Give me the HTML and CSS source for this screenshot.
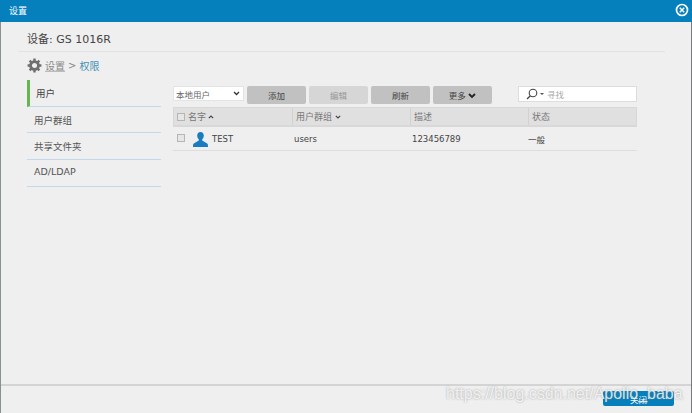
FILE: index.html
```html
<!DOCTYPE html>
<html lang="en">
<head>
    <meta charset="UTF-8">
    <title>设置</title>
    <link rel="stylesheet" href="styles.css">
</head>
<body>
    <div class="window">
        <div class="titlebar">
            <span class="title">设置</span>
            <svg class="close-icon" width="14" height="14" viewBox="0 0 14 14">
                <circle cx="7" cy="7" r="5.5" fill="none" stroke="#fff" stroke-width="1.7"/>
                <path d="M4.8 4.8l4.4 4.4M9.2 4.8l-4.4 4.4" stroke="#fff" stroke-width="1.5"/>
            </svg>
        </div>

        <div class="content">
            <div class="device">设备: GS 1016R</div>
            <div class="breadcrumb">
                <svg width="15" height="15" viewBox="0 0 16 16">
                    <circle cx="8" cy="8" r="4.2" fill="none" stroke="#6f6f6f" stroke-width="3"/>
                    <path d="M8 .6v3M8 12.4v3M.6 8h3M12.4 8h3M2.8 2.8l2.1 2.1M11.1 11.1l2.1 2.1M13.2 2.8l-2.1 2.1M4.9 11.1l-2.1 2.1" stroke="#6f6f6f" stroke-width="2.6"/>
                </svg>
                <span class="crumb-link">设置</span>
                <span class="crumb-sep">&gt;</span>
                <span class="crumb-current">权限</span>
            </div>

            <div class="main">
                <ul class="sidebar">
                    <li class="active">用户</li>
                    <li>用户群组</li>
                    <li>共享文件夹</li>
                    <li>AD/LDAP</li>
                </ul>

                <div class="panel">
                    <div class="toolbar">
                        <div class="select">本地用户
                            <svg width="7" height="5" viewBox="0 0 7 5"><path d="M1 1l2.5 2.5L6 1" fill="none" stroke="#333" stroke-width="1.3"/></svg>
                        </div>
                        <button class="btn">添加</button>
                        <button class="btn disabled">编辑</button>
                        <button class="btn">刷新</button>
                        <button class="btn">更多
                            <svg width="8" height="6" viewBox="0 0 8 6"><path d="M1 1l3 3 3-3" fill="none" stroke="#222" stroke-width="1.8"/></svg>
                        </button>
                        <div class="search">
                            <svg width="12" height="12" viewBox="0 0 12 12">
                                <circle cx="7" cy="5" r="3.8" fill="none" stroke="#444" stroke-width="1.1"/>
                                <path d="M4.4 7.8L1 11" stroke="#444" stroke-width="1.3"/>
                            </svg>
                            <span class="search-caret"></span>
                            <span class="search-text">寻找</span>
                        </div>
                    </div>

                    <div class="table">
                        <div class="row head">
                            <div class="cell col-name"><span class="check"></span>名字
                                <svg width="6" height="4" viewBox="0 0 6 4"><path d="M.8 3.2L3 1l2.2 2.2" fill="none" stroke="#444" stroke-width="1.1"/></svg>
                            </div>
                            <div class="cell col-group">用户群组
                                <svg width="6" height="4" viewBox="0 0 6 4"><path d="M.8.8L3 3 5.200.8" fill="none" stroke="#444" stroke-width="1.1"/></svg>
                            </div>
                            <div class="cell col-desc">描述</div>
                            <div class="cell col-status">状态</div>
                        </div>
                        <div class="row body-row">
                            <div class="cell col-name"><span class="check"></span>
                                <svg class="user-icon" width="15" height="15" viewBox="0 0 15 15">
                                    <path d="M7.500 0C5.400 0 4.200 1.500 4.200 3.600c0 1.600.7 3 1.600 3.800v1.200L.8 11.400C.2 11.800 0 12.500 0 15h15c0-2.500-.2-3.200-.8-3.600L9.200 8.600V7.400c.9-.8 1.600-2.200 1.600-3.800C10.800 1.500 9.600 0 7.500 0z" fill="#1a7cc0"/>
                                </svg>
                                TEST
                            </div>
                            <div class="cell col-group">users</div>
                            <div class="cell col-desc">123456789</div>
                            <div class="cell col-status">一般</div>
                        </div>
                    </div>
                </div>
            </div>
        </div>

        <div class="footer">
            <button class="close-btn">关闭</button>
        </div>

        <div class="watermark">https://blog.csdn.net/Apollo_baba</div>
    </div>
</body>
</html>
```

FILE: styles.css
```css
* {
    box-sizing: border-box;
}
html, body {
    margin: 0;
    height: 100%;
}
body {
    font-family: "DejaVu Sans", "Noto Sans CJK SC", sans-serif;
    font-size: 9px;
    color: #444;
    background-color: #efefef;
    overflow: hidden;
}
.window {
    position: relative;
    display: flex;
    flex-direction: column;
    height: 413px;
    border-left: 1px solid #8a8f92;
    border-right: 1px solid #77797b;
}
.titlebar {
    display: flex;
    align-items: center;
    justify-content: space-between;
    flex: 0 0 22px;
    margin: 0 -1px;
    padding: 0 3px 2px 9px;
    background-color: #0580bc;
    color: #fff;
}
.title {
    font-size: 9px;
}
.content {
    flex: 1;
    padding: 0 26px 0 17px;
}
.device {
    height: 30px;
    padding: 8px 0 0 9px;
    border-bottom: 1px solid #e2e2e2;
    font-size: 11px;
    color: #444;
}
.breadcrumb {
    display: flex;
    align-items: center;
    gap: 3px;
    height: 28px;
    padding: 0 0 2px 9px;
    font-size: 10px;
    color: #888;
}
.crumb-link {
    text-decoration: underline;
    text-decoration-color: #bbb;
}
.crumb-current {
    color: #3f8fb5;
}
.main {
    display: flex;
    padding-left: 9px;
}
.sidebar {
    flex: 0 0 134px;
    margin: 0;
    padding: 0;
    list-style: none;
}
.sidebar li {
    height: 26.700px;
    padding: 6px 0 0 7px;
    border-bottom: 1px solid #c3d8ec;
    font-size: 9.500px;
    color: #555;
}
.sidebar li.active {
    border-left: 3px solid #68b450;
    padding-left: 6px;
    color: #444;
}
.panel {
    width: 464px;
    margin-left: 12px;
    padding-top: 6px;
}
.toolbar {
    display: flex;
    align-items: flex-start;
    gap: 3px;
    height: 21px;
}
.select {
    display: flex;
    align-items: center;
    justify-content: space-between;
    width: 71px;
    height: 15px;
    padding: 0 3px 0 2px;
    background-color: #fff;
    border: 1px solid #e4e4e4;
    font-size: 8.500px;
    color: #666;
}
.btn {
    width: 59px;
    height: 18px;
    padding: 0;
    border: none;
    border-radius: 2px;
    background-color: #c1c1c1;
    font-family: inherit;
    font-size: 8.500px;
    color: #444;
}
.btn.disabled {
    background-color: #d6d6d6;
    color: #999;
}
.search {
    display: flex;
    align-items: center;
    width: 119px;
    height: 16px;
    margin-left: 23px;
    padding-left: 7px;
    background-color: #fff;
    border: 1px solid #ddd;
    font-size: 8.500px;
    color: #aaa;
}
.search-caret {
    width: 0;
    height: 0;
    margin: 0 3px 0 2px;
    border-left: 2px solid transparent;
    border-right: 2px solid transparent;
    border-top: 2px solid #555;
}
.row {
    display: flex;
    align-items: center;
}
.head {
    height: 20px;
    background-color: #e0e0e0;
    border: 1px solid #d8d8d8;
    border-bottom-width: 2px;
    color: #777;
}
.head .cell {
    display: flex;
    align-items: center;
    gap: 3px;
    height: 100%;
}
.body-row {
    height: 24px;
    padding-top: 1px;
    border-bottom: 1px solid #dedede;
    font-size: 8.500px;
    color: #444;
}
.cell {
    padding-left: 3px;
}
.body-row .cell {
    display: flex;
    align-items: center;
}
.col-name {
    width: 118px;
}
.col-group {
    width: 118px;
}
.head .col-group, .head .col-desc, .head .col-status {
    border-left: 1px solid #d2d2d2;
}
.col-desc {
    width: 118px;
}
.col-status {
    flex: 1;
}
.head .col-name {
    padding-left: 2px;
    gap: 2px;
}
.body-row .col-status {
    padding-left: 1px;
}
.check {
    display: inline-block;
    width: 8px;
    height: 8px;
    margin: 0 1px 0 1px;
    background-color: #e6e6e6;
    border: 1px solid #b5b5b5;
}
.body-row .check {
    margin: -3px 0 0 1px;
}
.user-icon {
    margin: 0 4px 0 8px;
}
.footer {
    display: flex;
    justify-content: flex-end;
    align-items: flex-start;
    flex: 0 0 29px;
    padding: 5px 17px 0 0;
    border-top: 2px solid #d4d4d4;
}
.close-btn {
    width: 71px;
    height: 15px;
    padding: 0;
    border: none;
    border-radius: 2px;
    background-color: #0580bc;
    font-family: inherit;
    font-size: 8.500px;
    color: #fff;
}
.watermark {
    position: absolute;
    left: 445px;
    top: 385px;
    font-family: "Liberation Sans", sans-serif;
    font-size: 16px;
    color: rgba(255, 255, 255, 0.8);
    text-shadow: 0 0 2px rgba(120, 120, 120, 0.7);
    white-space: nowrap;
}
```
